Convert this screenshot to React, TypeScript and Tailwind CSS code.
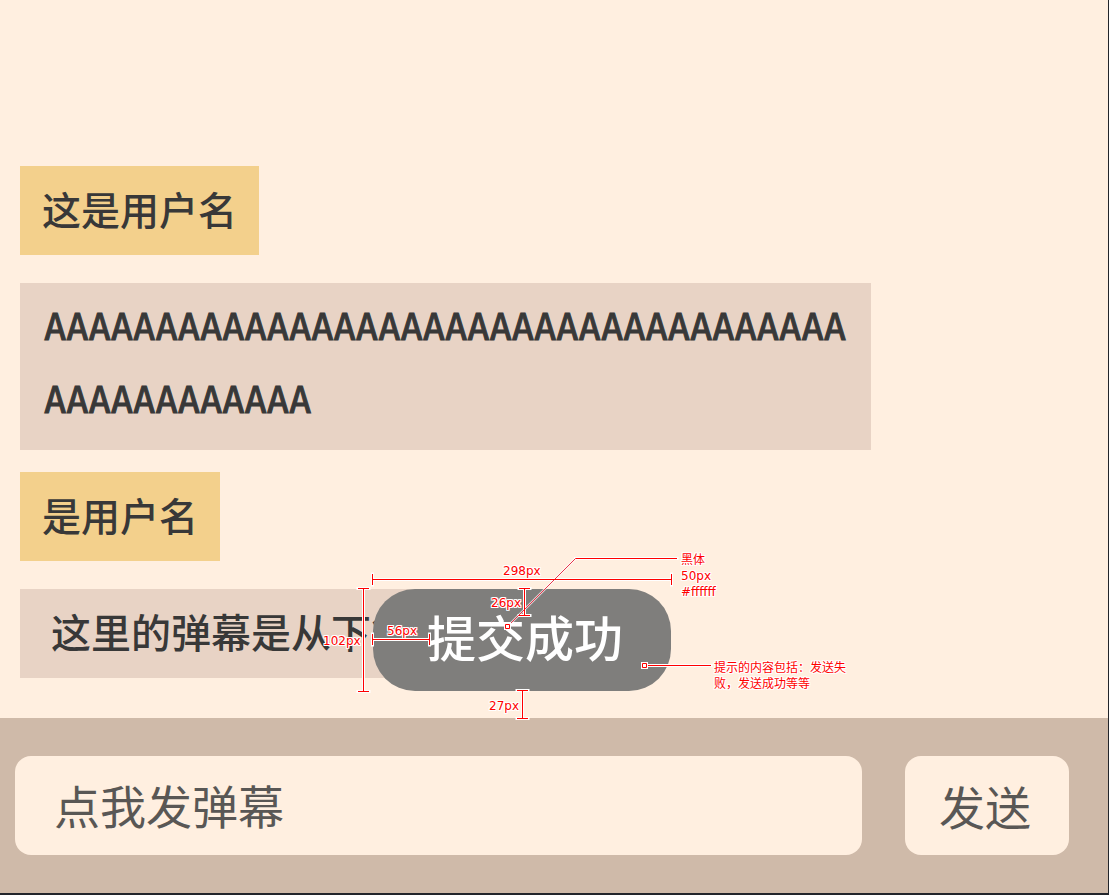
import React from "react";

type Note = { text: string; place: string };

const measures: Note[] = [
  { text: "298px", place: "left-[130px] top-[-26px]" },
  { text: "26px", place: "left-[118px] top-[6px]" },
  { text: "102px", place: "left-[-50px] top-[44px]" },
  { text: "56px", place: "left-[14px] top-[34px]" },
  { text: "27px", place: "left-[116px] top-[109px]" },
];

const halo =
  "[text-shadow:1px_0_#fff,-1px_0_#fff,0_1px_#fff,0_-1px_#fff,1px_1px_#fff,-1px_-1px_#fff,1px_-1px_#fff,-1px_1px_#fff]";

const straightLines =
  "M62.5 39.5H361.5M62.5 34V45M361.5 34V45" +
  "M53.5 48.5V151.5M48 48.5H59M48 151.5H59" +
  "M62.5 99.5H119.5M62.5 94V105M119.5 94V105" +
  "M214.5 48.5V75.5M209 48.5H220M209 75.5H220" +
  "M212.5 150.5V178.5M207 150.5H218M207 178.5H218" +
  "M265.5 18.5H367M337 125.5H401";

function UserName({ children }: { children: React.ReactNode }) {
  return (
    <h2 className="w-fit bg-[#f3d08c] px-[22px] pt-5 pb-6 text-[39px] leading-[45px] font-medium">
      {children}
    </h2>
  );
}

function Annotations() {
  return (
    <div
      className={`pointer-events-none absolute inset-0 font-['DejaVu_Sans','Noto_Sans_CJK_SC',sans-serif] text-[12px] leading-4 text-[#ff0000] ${halo}`}
    >
      <svg
        className="absolute left-[-63px] top-[-49px]"
        width="420"
        height="190"
        viewBox="0 0 420 190"
        fill="none"
        aria-hidden="true"
      >
        <path d="M265.5 18.5L199 85" stroke="#fff" strokeWidth="2.4" strokeOpacity="0.7" />
        <path d={straightLines} stroke="#fff" strokeWidth="3" strokeLinecap="square" />
        <path d="M265.5 18.5L199 85" stroke="#e8354a" strokeWidth="1" />
        <path d={straightLines} stroke="#f00" strokeWidth="1" />
        <path d="M194 83h7v7h-7zM331 122h7v7h-7z" fill="#fff" />
        <path d="M195.5 84.5h4v4h-4zM332.5 123.5h4v4h-4z" stroke="#f00" />
      </svg>
      {measures.map((m) => (
        <span key={m.text} className={`absolute whitespace-nowrap ${m.place}`}>
          {m.text}
        </span>
      ))}
      <p className="absolute left-[308px] top-[-37px] whitespace-nowrap">
        黑体
        <br />
        50px
        <br />
        #ffffff
      </p>
      <p className="absolute left-[341px] top-[71px] w-[134px]">
        提示的内容包括：发送失败，发送成功等等
      </p>
    </div>
  );
}

export default function App() {
  return (
    <div
      lang="zh-CN"
      className="flex min-h-screen flex-col overflow-hidden border-r border-b-2 border-[#22252b] bg-[#ffefe0] font-['Noto_Sans_CJK_SC',sans-serif] text-[#383838]"
    >
      <main className="relative flex flex-1 flex-col justify-end gap-[22px] px-5 pb-10">
        <section className="flex flex-col gap-7">
          <UserName>这是用户名</UserName>
          <p className="max-w-[851px] bg-[#e8d3c5] px-6 pt-2 pb-[13px] font-['DejaVu_Sans_Mono',monospace] text-[37px] leading-[73px] break-all [-webkit-text-stroke:1px]">
            {"A".repeat(48)}
          </p>
        </section>
        <section className="flex flex-col gap-7">
          <UserName>是用户名</UserName>
          <p className="w-fit bg-[#e8d3c5] px-[31px] pt-5 pb-6 text-[40px] leading-[45px] font-medium">
            这里的弹幕是从下往上
          </p>
        </section>
        <div className="absolute bottom-[27px] left-[373px]">
          <div
            role="status"
            className="rounded-[42px] bg-[#7f7e7c] pt-[22px] pr-12 pb-[30px] pl-[54px] text-[49px] leading-[50px] font-medium whitespace-nowrap text-white"
          >
            提交成功
          </div>
          <Annotations />
        </div>
      </main>
      <form
        className="flex gap-[43px] bg-[#cfbaa9] py-[38px] pr-[39px] pl-[15px] text-[46px] text-[#595755]"
        onSubmit={(e) => e.preventDefault()}
      >
        <input
          type="text"
          aria-label="弹幕内容"
          placeholder="点我发弹幕"
          className="h-[99px] min-w-0 flex-1 rounded-2xl bg-[#ffefe0] px-[39px] pb-1 outline-none placeholder:text-[#595755] placeholder:opacity-100"
        />
        <button type="submit" className="w-[164px] shrink-0 rounded-2xl bg-[#ffefe0] pr-1">
          发送
        </button>
      </form>
    </div>
  );
}
